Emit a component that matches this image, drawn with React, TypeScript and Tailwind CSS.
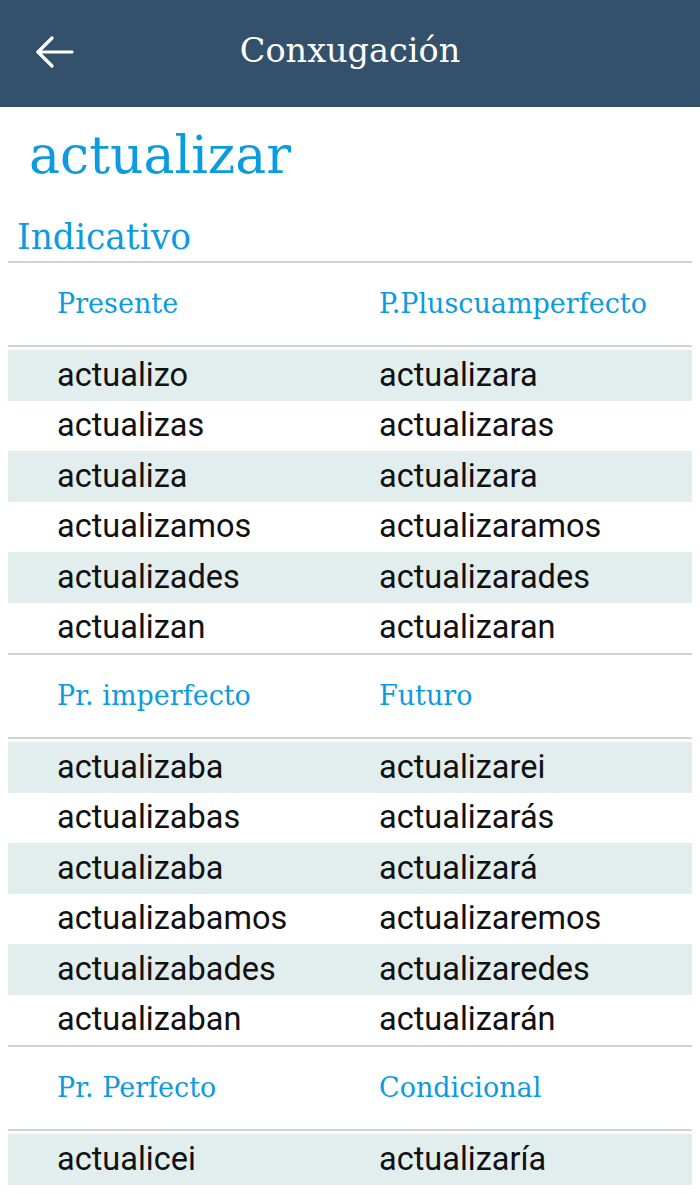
import React from "react";

const serif = "font-['DejaVu_Serif','Liberation_Serif',serif]";
const sans = "font-['Roboto','Liberation_Sans',sans-serif]";

type Section = { left: string; right: string; l: string[]; r: string[] };

const sections: Section[] = [
  {
    left: "Presente",
    right: "P.Pluscuamperfecto",
    l: ["actualizo", "actualizas", "actualiza", "actualizamos", "actualizades", "actualizan"],
    r: ["actualizara", "actualizaras", "actualizara", "actualizaramos", "actualizarades", "actualizaran"],
  },
  {
    left: "Pr. imperfecto",
    right: "Futuro",
    l: ["actualizaba", "actualizabas", "actualizaba", "actualizabamos", "actualizabades", "actualizaban"],
    r: ["actualizarei", "actualizarás", "actualizará", "actualizaremos", "actualizaredes", "actualizarán"],
  },
  {
    left: "Pr. Perfecto",
    right: "Condicional",
    l: ["actualicei"],
    r: ["actualizaría"],
  },
];

export default function App() {
  return (
    <div className="w-[700px] h-[1194px] overflow-hidden bg-white">
      <header className="h-[107px] bg-[#33516a] flex items-center relative">
        <div className="absolute left-[34px] top-[34px]">
          <svg width="42" height="36" viewBox="0 0 42 36" fill="none">
            <path d="M4 18H38" stroke="white" strokeWidth="3.2" strokeLinecap="round" />
            <path d="M18 4L4 18L18 32" stroke="white" strokeWidth="3.2" strokeLinecap="round" strokeLinejoin="round" />
          </svg>
        </div>
        <div className={`w-full text-center text-white text-[33.5px] leading-none ${serif} pb-[6px]`}>
          Conxugación
        </div>
      </header>

      <div className={`pl-[29px] pt-[18px] text-[52px] leading-[60px] text-[#0a9be0] ${serif}`}>actualizar</div>
      <div className={`pl-[17px] pt-[31px] text-[34.5px] leading-[42px] text-[#0a9be0] ${serif}`}>Indicativo</div>

      <div className="mx-[8px] mt-[3px]">
        {sections.map((s, si) => (
          <div key={si}>
            <div className="h-[2px] bg-[#d3d3d3]" />
            <div className={`h-[82px] grid grid-cols-[371px_1fr] items-center text-[27px] text-[#0a9be0] ${serif}`}>
              <div className="pl-[49px]">{s.left}</div>
              <div>{s.right}</div>
            </div>
            <div className="h-[2px] bg-[#d3d3d3] mb-[3px]" />
            {s.l.map((w, i) => (
              <div
                key={i}
                className={`h-[50.5px] grid grid-cols-[371px_1fr] items-center text-[32.5px] text-[#111111] ${sans} ${
                  i % 2 === 0 ? "bg-[#e2eeee]" : "bg-white"
                }`}
              >
                <div className="pl-[49px]">{w}</div>
                <div>{s.r[i]}</div>
              </div>
            ))}
          </div>
        ))}
      </div>
    </div>
  );
}
